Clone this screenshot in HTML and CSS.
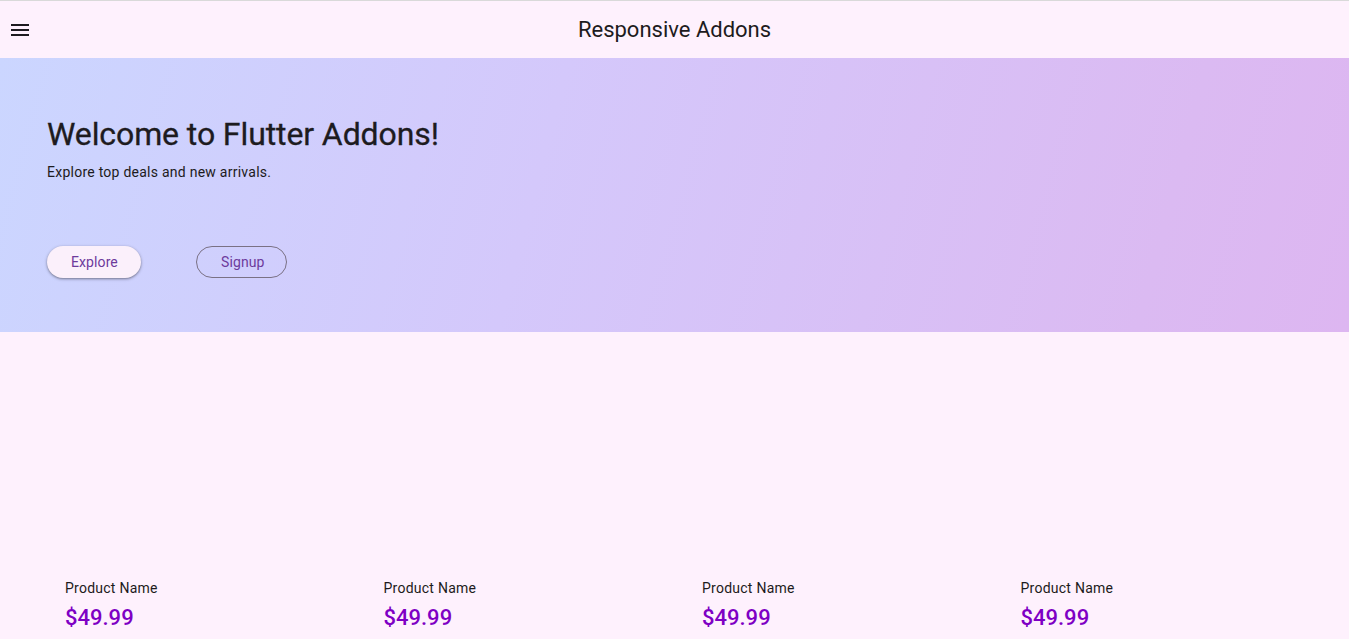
FILE: index.html
```html
<!DOCTYPE html>
<html>
<head>
<meta charset="utf-8">
<link rel="stylesheet" href="styles.css">
</head>
<body>
<header class="appbar">
  <button class="menu" aria-label="menu">
    <svg width="24" height="24" viewBox="0 0 24 24"><path d="M3 18h18v-2H3v2zm0-5h18v-2H3v2zm0-7v2h18V6H3z" fill="#1d1b20"/></svg>
  </button>
  <h1 class="title">Responsive Addons</h1>
</header>
<section class="hero">
  <h2 class="hero-title">Welcome to Flutter Addons!</h2>
  <p class="hero-sub">Explore top deals and new arrivals.</p>
  <div class="actions">
    <button class="btn btn-filled">Explore</button>
    <button class="btn btn-outline">Signup</button>
  </div>
</section>
<main class="grid">
  <div class="card"><div class="thumb"></div><div class="name">Product Name</div><div class="price">$49.99</div></div>
  <div class="card"><div class="thumb"></div><div class="name">Product Name</div><div class="price">$49.99</div></div>
  <div class="card"><div class="thumb"></div><div class="name">Product Name</div><div class="price">$49.99</div></div>
  <div class="card"><div class="thumb"></div><div class="name">Product Name</div><div class="price">$49.99</div></div>
</main>
</body>
</html>
```
FILE: styles.css
```css
* { box-sizing: border-box; }
html, body { margin: 0; padding: 0; }
body {
  background: #fef1fd;
  font-family: Roboto, "Noto Sans", sans-serif;
  color: #1d1b20;
  border-top: 1px solid #d9d9d9;
  height: 639px;
  overflow: hidden;
}
.appbar {
  height: 57px;
  display: flex;
  align-items: center;
  justify-content: center;
  position: relative;
  background: #fef1fd;
}
.menu {
  position: absolute;
  left: 8px;
  top: 17px;
  width: 24px;
  height: 24px;
  padding: 0;
  border: 0;
  background: none;
  display: flex;
}
.title {
  margin: 0;
  font-size: 22px;
  font-weight: 400;
  line-height: 28px;
  color: #1d1b20;
}
.hero {
  height: 274px;
  background: linear-gradient(105deg, #cbd6ff 0%, #d4c8fb 40%, #dbbaf2 85%, #ddb6f1 100%);
  padding: 56px 47px 0;
}
.hero-title {
  margin: 0;
  font-size: 32px;
  font-weight: 400;
  line-height: 40px;
  letter-spacing: -0.1px;
  color: #1d1b20;
  -webkit-text-stroke: 0.3px #1d1b20;
}
.hero-sub {
  margin: 8px 0 0;
  font-size: 14px;
  line-height: 20px;
  letter-spacing: 0.25px;
  color: #1d1b20;
}
.actions {
  display: flex;
  gap: 55px;
  margin-top: 64px;
}
.btn {
  height: 32px;
  border-radius: 16px;
  font-family: Roboto, sans-serif;
  font-size: 14px;
  letter-spacing: 0.1px;
  color: #6d3a9c;
  padding: 0 24px;
}
.btn-filled {
  width: 94px;
  background: #fbf0fb;
  border: 0;
  box-shadow: 0 1px 2px rgba(0,0,0,0.3), 0 1px 3px 1px rgba(0,0,0,0.12);
}
.btn-outline {
  width: 91px;
  background: transparent;
  border: 1px solid #7a7184;
}
.grid {
  display: grid;
  grid-template-columns: repeat(4, 318.5px);
  padding: 0 0 0 65px;
}
.thumb { height: 246px; }
.name {
  font-size: 14px;
  line-height: 20px;
  letter-spacing: 0.25px;
  color: #1d1b20;
}
.price {
  margin-top: 6px;
  font-size: 22px;
  font-weight: 500;
  line-height: 28px;
  color: #7e00c4;
}
```
